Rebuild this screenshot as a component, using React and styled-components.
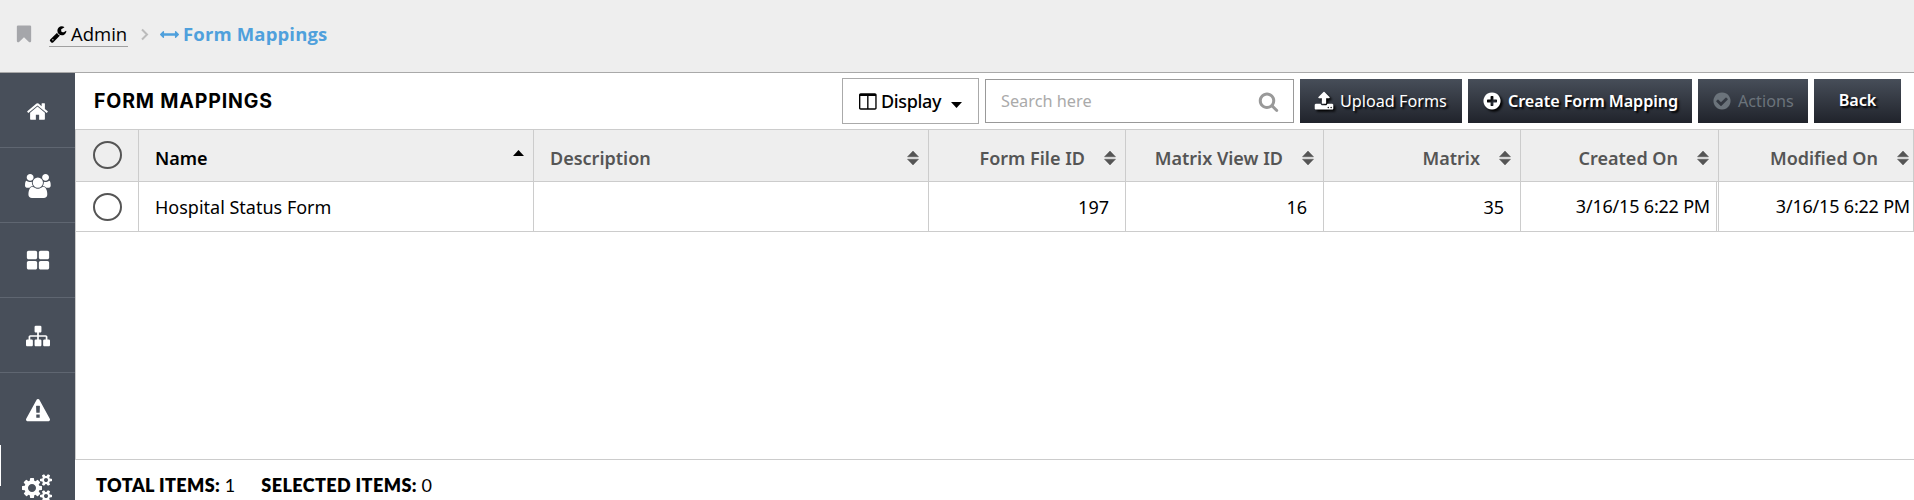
import React from "react";
import styled, { createGlobalStyle } from "styled-components";

const GlobalStyle = createGlobalStyle`
  * { box-sizing: border-box; }
  body { margin: 0; background: #fff; overflow: hidden; }
`;

const CIRCLE = "M1664 896q0 209-103 385.5t-279.5 279.5-385.5 103-385.5-103-279.5-279.5-103-385.5 103-385.5 279.5-279.5 385.5-103 385.5 103 279.5 279.5 103 385.5z";
const SMALL_COG = "v140q0 16-149 31-12 27-30 52 51 113 51 138 0 4-4 7-122 71-124 71-8 0-46-47t-52-68q-20 2-30 2t-30-2q-14 21-52 68t-46 47q-2 0-124-71-4-3-4-7 0-25 51-138-18-25-30-52-149-15-149-31v-140q0-16 149-31 13-29 30-52-51-113-51-138 0-4 4-7 4-2 35-20t59-34 30-16q8 0 46 46.5t52 67.5q20-2 30-2t30 2q51-71 92-112l6-2q4 0 124 70 4 3 4 7 0 25-51 138 17 23 30 52 149 15 149 31z";
const RING = "q0-52-38-90t-90-38-90 38-38 90q0 53 37.5 90.5t90.5 37.5 90.5-37.5 37.5-90.5z";
const TILE = "v384q0 52-38 90t-90 38h-512q-52 0-90-38t-38-90v-384q0-52 38-90t90-38h512q52 0 90 38t38 90z";

const PATHS = {
  home: "M1472 992v480q0 26-19 45t-45 19h-384v-384h-256v384h-384q-26 0-45-19t-19-45v-480q0-1 .5-3t.5-3l575-474 575 474q1 2 1 6zm223-69l-62 74q-8 9-21 11h-3q-13 0-21-7l-692-577-692 577q-12 8-24 7-13-2-21-11l-62-74q-8-10-7-23.5t11-21.5l719-599q32-26 76-26t76 26l244 204v-195q0-14 9-23t23-9h192q14 0 23 9t9 23v408l219 182q10 8 11 21.5t-7 23.5z",
  tiles: `M832 1024${TILE}M832 256${TILE}M1728 1024${TILE}M1728 256${TILE}`,
  sitemap: "M1792 1248v320q0 40-28 68t-68 28h-320q-40 0-68-28t-28-68v-320q0-40 28-68t68-28h96v-192h-512v192h96q40 0 68 28t28 68v320q0 40-28 68t-68 28h-320q-40 0-68-28t-28-68v-320q0-40 28-68t68-28h96v-192h-512v192h96q40 0 68 28t28 68v320q0 40-28 68t-68 28h-320q-40 0-68-28t-28-68v-320q0-40 28-68t68-28h96v-192q0-52 38-90t90-38h512v-192h-96q-40 0-68-28t-28-68v-320q0-40 28-68t68-28h320q40 0 68 28t28 68v320q0 40-28 68t-68 28h-96v192h512q52 0 90 38t38 90v192h96q40 0 68 28t28 68z",
  warning: "M1024 1375v-190q0-14-9.5-23.5t-22.5-9.5h-192q-13 0-22.5 9.5t-9.5 23.5v190q0 14 9.5 23.5t22.5 9.5h192q13 0 22.5-9.5t9.5-23.5zm-2-374l18-459q0-12-10-19-13-11-24-11h-220q-11 0-24 11-10 7-10 21l17 457q0 10 10 16.5t24 6.5h185q14 0 23.5-6.5t10.5-16.5zm-14-934l768 1408q35 63-2 126-17 29-46.5 46t-63.5 17h-1536q-34 0-63.5-17t-46.5-46q-37-63-2-126l768-1408q17-31 47-49t65-18 65 18 47 49z",
  cogs: `M832 896q0-106-75-181t-181-75-181 75-75 181 75 181 181 75 181-75 75-181zM1600 1408${RING}M1600 384${RING}M1216 805v185q0 10-7 19.5t-16 10.5l-155 24q-11 35-32 76 34 48 90 115 7 11 7 20 0 12-7 19-23 30-82.5 89.5t-78.5 59.5q-11 0-21-7l-115-90q-37 19-77 31-11 108-23 155-7 24-30 24h-186q-11 0-20-7.5t-10-17.5l-23-153q-34-10-75-31l-118 89q-7 7-20 7-11 0-21-8-144-133-144-160 0-9 7-19 10-14 41-53t47-61q-23-44-35-82l-152-24q-10-1-17-9.5t-7-19.5v-185q0-10 7-19.5t16-10.5l155-24q11-35 32-76-34-48-90-115-7-11-7-20 0-12 7-20 22-30 82-89t79-59q11 0 21 7l115 90q34-18 77-32 11-108 23-154 7-24 30-24h186q11 0 20 7.5t10 17.5l23 153q34 10 75 31l118-89q8-7 20-7 11 0 21 8 144 133 144 160 0 8-7 19-12 16-42 54t-45 60q23 48 34 82l152 23q10 2 17 10.5t7 19.5zM1856 1338${SMALL_COG}M1856 314${SMALL_COG}`,
  search: "M1216 832q0-185-131.5-316.5t-316.5-131.5-316.5 131.5-131.5 316.5 131.5 316.5 316.5 131.5 316.5-131.5 131.5-316.5zm512 832q0 52-38 90t-90 38q-54 0-90-38l-343-342q-179 124-399 124-143 0-273.5-55.5t-225-150-150-225-55.5-273.5 55.5-273.5 150-225 225-150 273.5-55.5 273.5 55.5 225 150 150 225 55.5 273.5q0 220-124 399l343 343q37 37 37 90z",
  plus: `M1344 960v-128q0-26-19-45t-45-19h-256v-256q0-26-19-45t-45-19h-128q-26 0-45 19t-19 45v256h-256q-26 0-45 19t-19 45v128q0 26 19 45t45 19h256v256q0 26 19 45t45 19h128q26 0 45-19t19-45v-256h256q26 0 45-19t19-45z${CIRCLE}`,
  check: `M1412 734q0-28-18-46l-91-90q-19-19-45-19t-45 19l-408 407-226-226q-19-19-45-19t-45 19l-91 90q-18 18-18 46 0 27 18 45l362 362q19 19 45 19 27 0 46-19l543-543q18-18 18-45z${CIRCLE}`,
  upload: "M1344 1472q0-26-19-45t-45-19-45 19-19 45 19 45 45 19 45-19 19-45zm256 0q0-26-19-45t-45-19-45 19-19 45 19 45 45 19 45-19 19-45zm128-224v320q0 40-28 68t-68 28h-1472q-40 0-68-28t-28-68v-320q0-40 28-68t68-28h427q21 56 70.5 92t110.5 36h256q61 0 110.5-36t70.5-92h427q40 0 68 28t28 68zm-325-648q-17 40-59 40h-256v448q0 26-19 45t-45 19h-256q-26 0-45-19t-19-45v-448h-256q-42 0-59-40-17-39 14-69l448-448q18-19 45-19t45 19l448 448q31 30 14 69z",
  bookmark: "M1420 128q23 0 44 9 33 13 52.5 41t19.5 62v1289q0 34-19.5 62t-52.5 41q-19 8-44 8-48 0-83-32l-441-424-441 424q-36 33-83 33-23 0-44-9-33-13-52.5-41t-19.5-62v-1289q0-34 19.5-62t52.5-41q21-9 44-9h1048z",
  wrench: "M448 1472q0-26-19-45t-45-19-45 19-19 45 19 45 45 19 45-19 19-45zm644-420l-682 682q-37 37-90 37-52 0-91-37l-106-108q-38-36-38-90 0-53 38-91l681-681q39 98 114.5 173.5t173.5 114.5zm634-435q0 39-23 106-47 134-164.5 217.5t-258.5 83.5q-185 0-316.5-131.5t-131.5-316.5 131.5-316.5 316.5-131.5q58 0 121.5 16.5t107.5 46.5q16 11 16 28t-16 28l-293 169v224l193 107q5-3 79-48.5t135.5-81 70.5-35.5q15 0 23.5 10t8.5 25z",
  arrows: "M1792 896q0 26-19 45l-256 256q-19 19-45 19t-45-19-19-45v-128h-1024v128q0 26-19 45t-45 19-45-19l-256-256q-19-19-19-45t19-45l256-256q19-19 45-19t45 19 19 45v128h1024v-128q0-26 19-45t45-19 45 19l256 256q19 19 19 45z",
  columns: "M160 1536h608v-1152h-640v1120q0 13 9.5 22.5t22.5 9.5zm1376-32v-1120h-640v1152h608q13 0 22.5-9.5t9.5-22.5zm128-1216v1216q0 66-47 113t-113 47h-1344q-66 0-113-47t-47-113v-1216q0-66 47-113t113-47h1344q66 0 113 47t47 113z",
  users: "M593 896q-162 5-265 128h-134q-82 0-138-40.5t-56-118.5q0-353 124-353 6 0 43.5 21t97.5 42.500 119 21.500q67 0 133-23-5 37-5 66 0 139 81 256zM1664 1533q0 120-73 189.500t-194 69.500h-874q-121 0-194-69.500t-73-189.500q0-53 3.500-103.500t14-109 26.500-108.500 43-97.500 62-81 85.500-53.500 111.500-20q10 0 43 21.500t73 48 107 48 135 21.500 135-21.500 107-48 73-48 43-21.500q61 0 111.500 20t85.500 53.500 62 81 43 97.500 26.500 108.500 14 109 3.500 103.500zM640 256q0 106-75 181t-181 75-181-75-75-181 75-181 181-75 181 75 75 181zM1344 640q0 159-112.500 271.500t-271.500 112.500-271.500-112.500-112.500-271.500 112.500-271.500 271.500-112.500 271.500 112.500 112.500 271.500zM1920 865q0 78-56 118.500t-138 40.500h-134q-103-123-265-128 81-117 81-256 0-29-5-66 66 23 133 23 59 0 119-21.500t97.500-42.500 43.500-21q124 0 124 353zM1792 256q0 106-75 181t-181 75-181-75-75-181 75-181 181-75 181 75 75 181z",
};

const Svg = styled.svg`
  display: block;
  flex: none;
  fill: currentColor;
  overflow: visible;
`;

const Icon = ({ name, size, wide, className }) => (
  <Svg
    className={className}
    width={wide ? (size * 15) / 14 : size}
    height={size}
    viewBox={wide ? "0 0 1920 1792" : "0 0 1792 1792"}
    fillRule="evenodd"
  >
    <path d={PATHS[name]} />
  </Svg>
);

const Page = styled.div`
  display: flex;
  flex-direction: column;
  width: 1914px;
  height: 500px;
  overflow: hidden;
  font-family: "Noto Sans", sans-serif;
  font-size: 18px;
  line-height: 24px;
  color: #000;
`;

const Breadcrumb = styled.header`
  display: flex;
  align-items: flex-start;
  flex: none;
  height: 73px;
  padding: 22px 0 0 14px;
  background: #eee;
  border-bottom: 1px solid #a9a9a9;
  font-family: "Open Sans", sans-serif;
  font-size: 18.5px;
`;
const BookmarkIcon = styled(Icon)`
  margin-top: 2px;
  color: #a5a6aa;
`;
const AdminLink = styled.a`
  display: flex;
  align-items: center;
  gap: 4px;
  width: 79px;
  height: 25px;
  margin-left: 15px;
  border-bottom: 1px solid #a0a0a0;
`;
const Chevron = styled(Svg)`
  margin: 7px 12px 0 13px;
  fill: none;
  stroke: #bbb;
  stroke-width: 2;
`;
const Current = styled.span`
  display: flex;
  align-items: center;
  gap: 4px;
  color: #4fa0dc;
  font-weight: 700;
  letter-spacing: 0.15px;
`;

const Body = styled.div`
  display: flex;
  flex: 1;
  min-height: 0;
`;
const Sidebar = styled.nav`
  flex: none;
  width: 75px;
  overflow: hidden;
  background: #484f5a;
`;
const SideItem = styled.div`
  display: flex;
  align-items: center;
  justify-content: center;
  height: 75px;
  padding-top: ${(p) => p.$drop || 0}px;
  color: #fff;
  border-bottom: 1px solid ${(p) => (p.$plain ? "transparent" : "#5f6671")};
`;
const ActiveItem = styled(SideItem)`
  position: relative;
  &::before {
    content: "";
    position: absolute;
    left: 0;
    top: -3px;
    width: 1px;
    height: 41px;
    background: #fff;
  }
`;
const Main = styled.main`
  display: flex;
  flex-direction: column;
  flex: 1;
  min-width: 0;
`;

const TitleBar = styled.div`
  display: flex;
  align-items: flex-start;
  flex: none;
  gap: 6px;
  height: 57px;
  padding: 6px 13px 0 19px;
  border-bottom: 1px solid #ccc;
`;
const Title = styled.h1`
  flex: 1;
  margin: 10px 0 0;
  font: 700 19.5px/24px "Inter", sans-serif;
  letter-spacing: 0.85px;
`;
const DisplayButton = styled.button`
  display: flex;
  align-items: center;
  width: 137px;
  height: 46px;
  margin-top: -1px;
  padding: 0 0 0 16px;
  background: #fff;
  border: 1px solid #aaa;
  font: 500 18px/24px "Noto Sans", sans-serif;
  letter-spacing: -0.35px;
  color: #000;
`;
const DisplayLabel = styled.span`
  margin: 0 10px 0 3px;
`;
const Caret = styled(Svg)`
  margin-top: ${(p) => p.$down || 0}px;
`;
const SearchBox = styled.div`
  display: flex;
  align-items: center;
  justify-content: space-between;
  width: 309px;
  height: 44px;
  padding: 0 14px 0 15px;
  border: 1px solid #999;
  color: #aaa;
  font-size: 16.3px;
`;
const SearchIcon = styled(Icon)`
  color: #999;
`;
const DarkButton = styled.button`
  display: flex;
  align-items: center;
  justify-content: ${(p) => (p.$center ? "center" : "flex-start")};
  gap: 6px;
  width: ${(p) => p.$width}px;
  height: 44px;
  padding: 0 0 ${(p) => (p.$center ? 2 : 0)}px ${(p) => (p.$center ? 0 : 14)}px;
  border: 0;
  background: linear-gradient(#474e59, #20232b);
  color: ${(p) => (p.$disabled ? "#6b737b" : "#fff")};
  font: ${(p) => p.$weight || 400} 16.2px/24px "Noto Sans", sans-serif;
  letter-spacing: ${(p) => (p.$weight ? -0.08 : 0)}px;
  text-shadow: ${(p) => (p.$disabled ? "none" : "2px 2px 2px #000")};
  white-space: nowrap;
  svg { filter: ${(p) => (p.$disabled ? "none" : "drop-shadow(2px 2px 1px #000)")}; }
`;

const Table = styled.div`
  flex: 1;
  border-left: 1px solid #ccc;
`;
const Row = styled.div`
  display: grid;
  grid-template-columns: 63px 395px 395px 197px 198px 197px 198px 195px;
  height: ${(p) => (p.$head ? 52 : 50)}px;
  background: ${(p) => (p.$head ? "#eee" : "#fff")};
  border-bottom: 1px solid #ccc;
`;
const Cell = styled.div`
  display: flex;
  align-items: center;
  justify-content: ${(p) => (p.$right ? "flex-end" : "flex-start")};
  padding: 0 ${(p) => p.$pad ?? 16}px 0 16px;
  border-right: 1px solid #ccc;
  white-space: nowrap;
`;
const HeadCell = styled(Cell)`
  gap: 19px;
  padding: 5px ${(p) => p.$pad ?? 9}px 0 16px;
  justify-content: ${(p) => (p.$right ? "flex-end" : "space-between")};
  color: ${(p) => (p.$sorted ? "#000" : "#555")};
  font-weight: 600;
`;
const DateCell = styled(Cell)`
  padding-bottom: 1px;
  letter-spacing: -0.2px;
  box-shadow: ${(p) => (p.$double ? "inset -1px 0 #fff, inset -2px 0 #ccc" : "none")};
`;
const CheckCell = styled.div`
  display: flex;
  align-items: flex-start;
  padding: 11px 0 0 17px;
  border-right: 1px solid #ccc;
`;
const Check = styled.span`
  width: 29px;
  height: 28px;
  border: 2px solid #555;
  border-radius: 50%;
`;

const Footer = styled.footer`
  display: flex;
  align-items: center;
  gap: 26px;
  flex: none;
  height: 41px;
  padding: 9px 0 0 21px;
  border-top: 1px solid #ccc;
  font-family: "Lato", sans-serif;
  font-size: 18px;
`;
const FootLabel = styled.b`
  font-weight: 800;
  letter-spacing: 0.4px;
`;

const Sort = () => (
  <Svg width="12" height="14" viewBox="0 0 12 14">
    <path d="M.5 5.800 6 0 11.500 5.800ZM.5 8.200H11.500L6 14Z" stroke="currentColor" strokeWidth=".5" />
  </Svg>
);

const COLUMNS = [
  { label: "Description" },
  { label: "Form File ID", right: true },
  { label: "Matrix View ID", right: true },
  { label: "Matrix", right: true },
  { label: "Created On", right: true },
  { label: "Modified On", right: true, pad: 4 },
];

export default function App() {
  return (
    <Page>
      <GlobalStyle />
      <Breadcrumb>
        <BookmarkIcon name="bookmark" size={20} />
        <AdminLink>
          <Icon name="wrench" size={18} />
          Admin
        </AdminLink>
        <Chevron width="7" height="11" viewBox="0 0 7 11">
          <path d="M1 .5 6 5.500 1 10.500" />
        </Chevron>
        <Current>
          <Icon name="arrows" size={19} />
          Form Mappings
        </Current>
      </Breadcrumb>
      <Body>
        <Sidebar>
          <SideItem $drop={2}><Icon name="home" size={23} /></SideItem>
          <SideItem $drop={2}><Icon name="users" size={24} wide /></SideItem>
          <SideItem $drop={1}><Icon name="tiles" size={24} /></SideItem>
          <SideItem $drop={1}><Icon name="sitemap" size={24} /></SideItem>
          <SideItem $plain $drop={2}><Icon name="warning" size={24} /></SideItem>
          <ActiveItem $drop={6}><Icon name="cogs" size={28} wide /></ActiveItem>
        </Sidebar>
        <Main>
          <TitleBar>
            <Title>FORM MAPPINGS</Title>
            <DisplayButton>
              <Icon name="columns" size={19} />
              <DisplayLabel>Display</DisplayLabel>
              <Caret $down={7} width="11" height="6" viewBox="0 0 11 6">
                <path d="M0 0H11L5.500 6Z" />
              </Caret>
            </DisplayButton>
            <SearchBox>
              Search here
              <SearchIcon name="search" size={21} />
            </SearchBox>
            <DarkButton $width={162}><Icon name="upload" size={20} />Upload Forms</DarkButton>
            <DarkButton $width={224} $weight={600}><Icon name="plus" size={20} />Create Form Mapping</DarkButton>
            <DarkButton $width={110} $disabled><Icon name="check" size={20} />Actions</DarkButton>
            <DarkButton $width={87} $weight={600} $center>Back</DarkButton>
          </TitleBar>
          <Table>
            <Row $head>
              <CheckCell><Check /></CheckCell>
              <HeadCell $sorted>
                Name
                <Caret $down={-10} width="11" height="6" viewBox="0 0 11 6">
                  <path d="M0 6H11L5.500 0Z" />
                </Caret>
              </HeadCell>
              {COLUMNS.map((c) => (
                <HeadCell key={c.label} $right={c.right} $pad={c.pad}>
                  {c.label}
                  <Sort />
                </HeadCell>
              ))}
            </Row>
            <Row>
              <CheckCell><Check /></CheckCell>
              <Cell>Hospital Status Form</Cell>
              <Cell />
              <Cell $right>197</Cell>
              <Cell $right>16</Cell>
              <Cell $right>35</Cell>
              <DateCell $right $pad={8} $double>3/16/15 6:22 PM</DateCell>
              <DateCell $right $pad={3}>3/16/15 6:22 PM</DateCell>
            </Row>
          </Table>
          <Footer>
            <span><FootLabel>TOTAL ITEMS:</FootLabel> 1</span>
            <span><FootLabel>SELECTED ITEMS:</FootLabel> 0</span>
          </Footer>
        </Main>
      </Body>
    </Page>
  );
}
